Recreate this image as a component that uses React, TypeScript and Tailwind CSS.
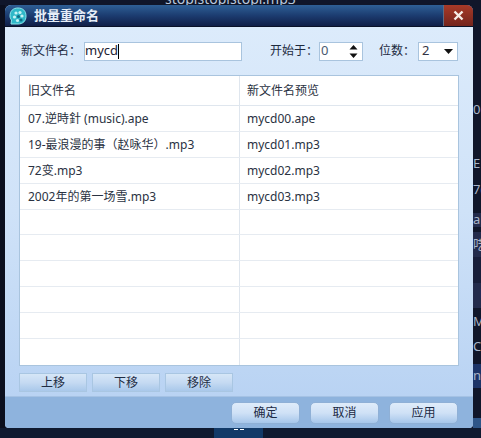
const font = { fontFamily: '"Noto Sans", "Noto Sans CJK SC", sans-serif' };

const rows = [
  ['07.逆時針 (music).ape', 'mycd00.ape'],
  ['19-最浪漫的事（赵咏华）.mp3', 'mycd01.mp3'],
  ['72变.mp3', 'mycd02.mp3'],
  ['2002年的第一场雪.mp3', 'mycd03.mp3'],
  ['', ''],
  ['', ''],
  ['', ''],
  ['', ''],
  ['', ''],
  ['', ''],
];

const sideStrip = [
  { h: 'h-[95px]', bg: 'bg-[#10162a]', t: '' },
  { h: 'h-[22px]', bg: 'bg-[#10162a]', t: '06' },
  { h: 'h-[32px]', bg: 'bg-[#10162a]', t: '' },
  { h: 'h-[22px]', bg: 'bg-[#10162a]', t: 'E' },
  { h: 'h-[5px]', bg: 'bg-[#10162a]', t: '' },
  { h: 'h-[22px]', bg: 'bg-[#10162a]', t: '7(' },
  { h: 'h-[12px]', bg: 'bg-[#10162a]', t: '' },
  { h: 'h-[15px]', bg: 'bg-[#232b4c]', t: 'a' },
  { h: 'h-[5px]', bg: 'bg-[#10162a]', t: '' },
  { h: 'h-[25px]', bg: 'bg-[#232b4c]', t: '呓' },
  { h: 'h-[26px]', bg: 'bg-[#181e3a]', t: '' },
  { h: 'h-[26px]', bg: 'bg-[#232b4c]', t: '「' },
  { h: 'h-[26px]', bg: 'bg-[#10162a]', t: 'M' },
  { h: 'h-[26px]', bg: 'bg-[#10162a]', t: 'C' },
  { h: 'h-[4px]', bg: 'bg-[#10162a]', t: '' },
  { h: 'h-[24px]', bg: 'bg-[#1c3468]', t: 'n' },
  { h: 'h-[31px]', bg: 'bg-[#10162a]', t: '' },
  { h: 'h-[10px]', bg: 'bg-[#2f5688]', t: '' },
];

function SmallButton({ label }: { label: string }) {
  return (
    <div className="w-[68px] h-[19px] flex items-center justify-center border border-[#a9c6e2] bg-gradient-to-b from-[#d6e6f7] via-[#c5daf2] to-[#a9c8ea] text-[12px] text-[#1f2d44]">
      {label}
    </div>
  );
}

function FooterButton({ label }: { label: string }) {
  return (
    <div className="w-[69px] h-[22px] flex items-center justify-center rounded-[5px] border border-[#8fb0d6] bg-gradient-to-b from-[#dfecfa] via-[#cfe1f6] to-[#a6c6ea] text-[12px] text-[#1c2a44]">
      {label}
    </div>
  );
}

function AppIcon() {
  return (
    <svg width="18" height="18" viewBox="0 0 18 18">
      <path d="M9 1 C14 1 17 4 17 9 C17 14 14 17 9 17 L2 17 L2.5 13 C1.5 12 1 10.5 1 9 C1 4 4 1 9 1 Z" fill="#2fb8c8" stroke="#8ee8ee" strokeWidth="1" />
      <circle cx="7" cy="6" r="1.6" fill="#c5f3f5" />
      <circle cx="11" cy="5.5" r="1.6" fill="#c5f3f5" />
      <circle cx="5.5" cy="10" r="1.6" fill="#c5f3f5" />
      <circle cx="9.5" cy="9.5" r="1.6" fill="#0f6f88" />
      <circle cx="13" cy="9" r="1.6" fill="#c5f3f5" />
      <circle cx="8.5" cy="13.5" r="1.6" fill="#c5f3f5" />
      <circle cx="12" cy="13" r="1.6" fill="#0f6f88" />
    </svg>
  );
}

export default function App() {
  return (
    <div className="w-[481px] h-[438px] flex flex-col overflow-hidden bg-[#10162a]" style={font}>
      <div className="h-[5px] overflow-hidden pl-[165px] text-[14px] leading-[14px] text-[#b9c8dc]">
        <div className="-mt-[8px] whitespace-nowrap">stoplstoplstopl.mp3</div>
      </div>

      <div className="flex h-[423px]">
        <div className="w-[5px] bg-[#0b0f1e]" />

        {/* dialog */}
        <div className="w-[468px] flex flex-col rounded-t-[6px] rounded-b-[4px] overflow-hidden bg-[#bcd5f3]">
          <div className="h-[22px] flex items-stretch bg-gradient-to-b from-[#2f6096] via-[#1c3c70] to-[#101f48] border-b border-[#0a1228]">
            <div className="flex-1 flex items-center pl-[4px] gap-[7px]">
              <AppIcon />
              <span className="text-[13px] font-bold text-[#e6eef8]">批量重命名</span>
            </div>
            <div className="w-[30px] flex items-center justify-center bg-gradient-to-b from-[#a83a28] to-[#74241c] border-l border-[#5f6a80]">
              <svg width="11" height="11" viewBox="0 0 11 11">
                <path d="M1.5 1.5 L9.5 9.5 M9.5 1.5 L1.5 9.5" stroke="#f6ece6" strokeWidth="2.4" />
              </svg>
            </div>
          </div>

          <div className="flex-1 flex flex-col bg-gradient-to-b from-[#dcebfb] via-[#cfe2f8] to-[#b9d3f3] pl-[14px] pr-[13px]">
            {/* form row */}
            <div className="mt-[14px] h-[20px] flex items-center text-[12px] text-[#1d2a3f] whitespace-nowrap">
              <span className="w-[65px] pl-[2px]">新文件名：</span>
              <div className="w-[158px] h-[19px] flex items-center bg-white border border-[#a9c4de] text-[13px] text-[#223]">
                mycd<span className="w-px h-[15px] bg-black" />
              </div>
              <span className="ml-[28px] w-[49px]">开始于：</span>
              <div className="w-[44px] h-[19px] flex items-center justify-between bg-white border border-[#a9c4de] pl-px pr-[4px] text-[13px] text-[#4a5a70]">
                0
                <svg width="9" height="15" viewBox="0 0 9 15">
                  <path d="M4.5 1 L8.5 5.5 H0.5 Z M0.5 9.5 H8.5 L4.5 14 Z" fill="#111" />
                </svg>
              </div>
              <span className="ml-[16px] w-[39px]">位数：</span>
              <div className="w-[40px] h-[19px] flex items-center justify-between bg-white border border-[#a9c4de] pl-[3px] pr-[4px] text-[13px] text-[#334]">
                2
                <svg width="9" height="5" viewBox="0 0 9 5">
                  <path d="M0 0 H9 L4.5 5 Z" fill="#111" />
                </svg>
              </div>
            </div>

            {/* table */}
            <div className="mt-[14px] w-[440px] h-[291px] bg-white border border-[#a9c4de] flex flex-col text-[12px] text-[#2a3242]">
              <div className="h-[30px] flex items-center border-b border-[#dfe6ee]">
                <div className="w-[220px] h-full flex items-center pl-[8px] pt-[2px] border-r border-[#dfe6ee]">旧文件名</div>
                <div className="flex-1 pl-[7px] pt-[2px]">新文件名预览</div>
              </div>
              {rows.map((r, i) => (
                <div key={i} className="h-[26px] flex items-center border-b border-[#e6ebf1] last:border-b-0">
                  <div className="w-[220px] h-full flex items-center pl-[8px] pt-[2px] border-r border-[#dfe6ee] whitespace-nowrap">{r[0]}</div>
                  <div className="flex-1 pl-[7px] pt-[2px]">{r[1]}</div>
                </div>
              ))}
            </div>

            <div className="mt-[7px] flex gap-[5px]">
              <SmallButton label="上移" />
              <SmallButton label="下移" />
              <SmallButton label="移除" />
            </div>
          </div>

          {/* footer */}
          <div className="h-[32px] flex items-center justify-end gap-[10px] pr-[15px] bg-[#8eb3dd] border-t border-[#a5c2e4]">
            <FooterButton label="确定" />
            <FooterButton label="取消" />
            <FooterButton label="应用" />
          </div>
        </div>

        <div className="w-[8px] flex flex-col overflow-hidden text-[13px] leading-[13px] text-[#a9b4c8]">
          {sideStrip.map((s, i) => (
            <div key={i} className={`${s.h} ${s.bg} flex items-center whitespace-nowrap`}>{s.t}</div>
          ))}
        </div>
      </div>

      <div className="h-[10px] flex bg-[#0f1a30]">
        <div className="w-[214px]" />
        <div className="w-[49px] bg-[#123a68] flex justify-center gap-[2px] pt-[1px]">
          <span className="w-[4px] h-px bg-white" />
          <span className="w-[4px] h-px bg-white" />
        </div>
      </div>
    </div>
  );
}
